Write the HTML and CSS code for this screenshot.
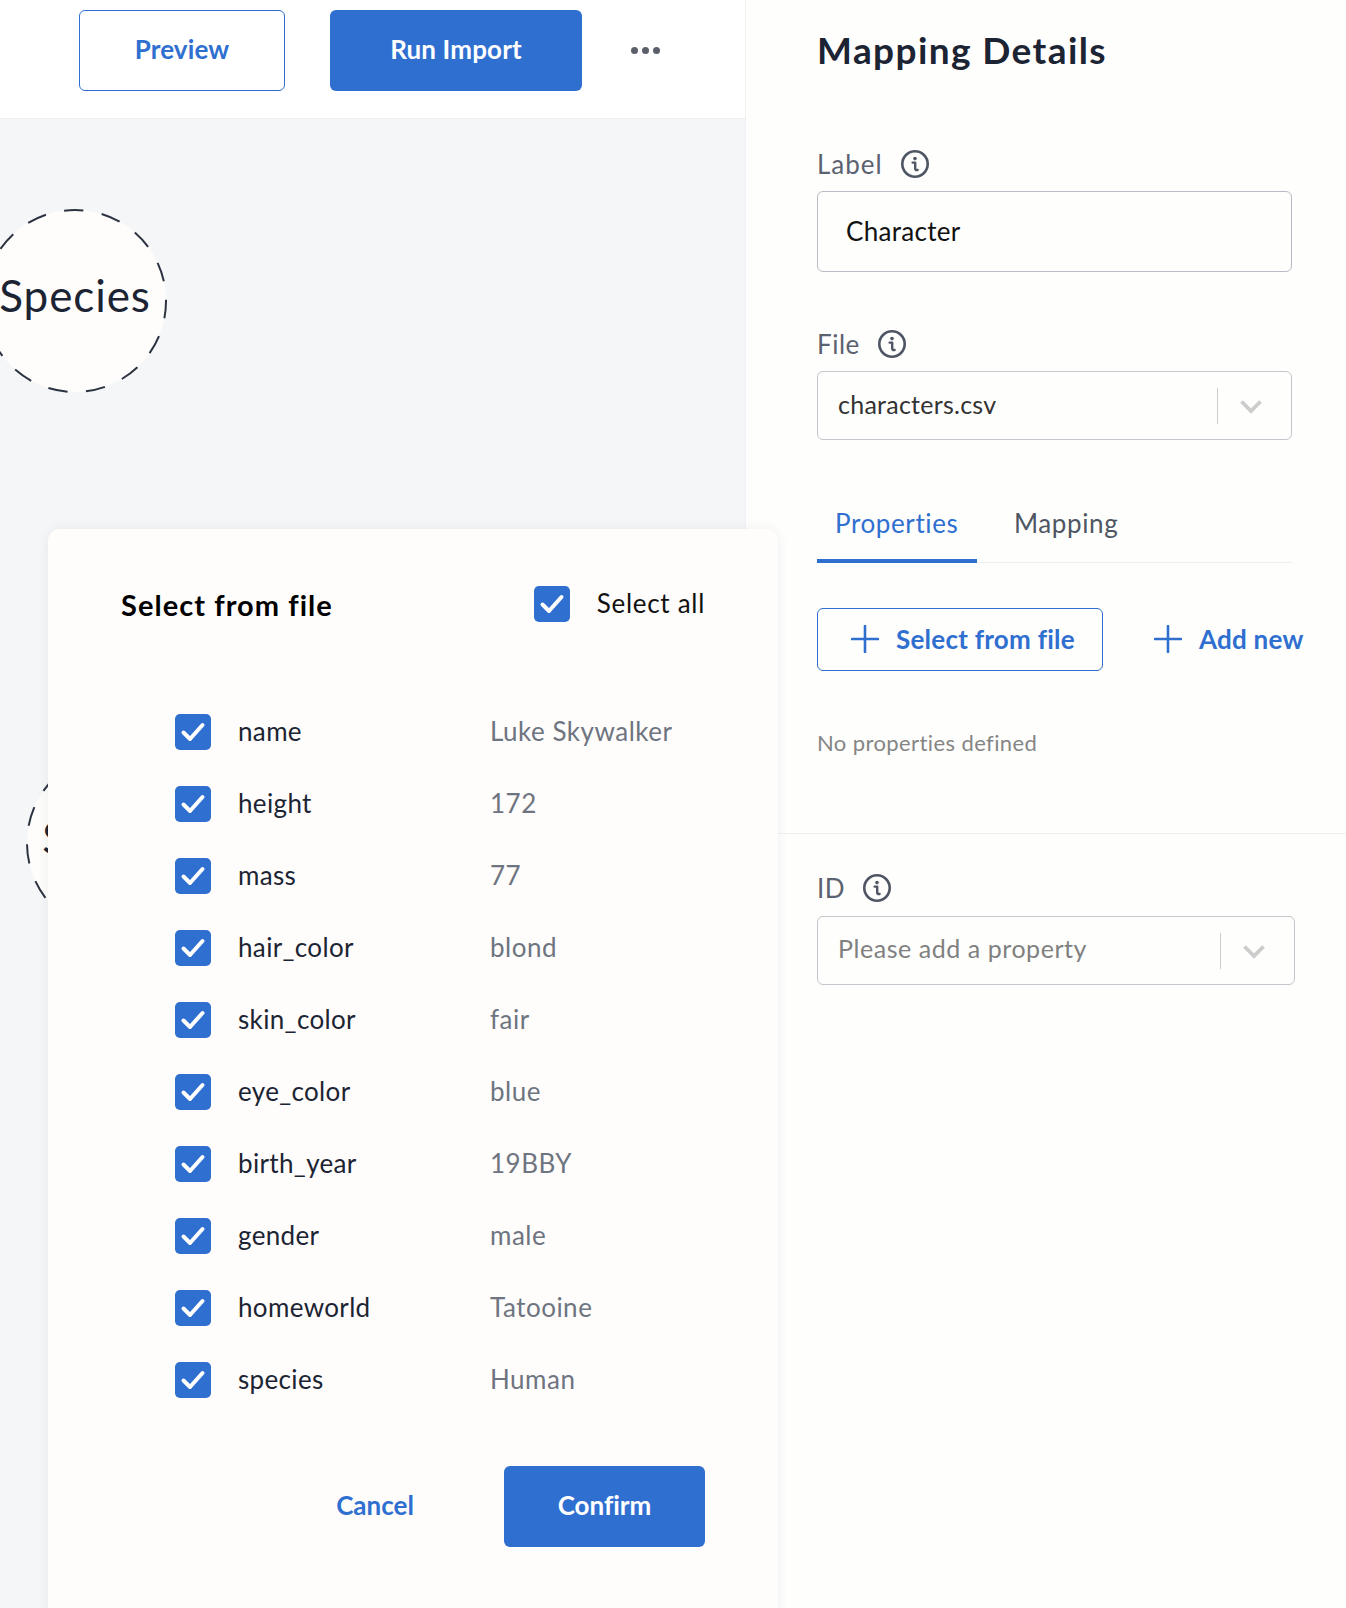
FILE: index.html
```html
<!DOCTYPE html>
<html>
<head>
<meta charset="utf-8">
<title>Mapping Details</title>
<link rel="stylesheet" href="styles.css">
</head>
<body>
<svg class="sprite" width="0" height="0">
    <symbol id="check" viewBox="0 0 36 36">
        <path d="M8.5 18.5l6.5 6.5L27.5 11" fill="none" stroke="#fff" stroke-width="4" stroke-linecap="round" stroke-linejoin="round"/>
    </symbol>
    <symbol id="info" viewBox="0 0 30 30">
        <circle cx="15" cy="15" r="12.7" fill="none" stroke="currentColor" stroke-width="2.6"/>
        <circle cx="15" cy="9.6" r="1.8" fill="currentColor"/>
        <path d="M12.6 13.6h2.6v6.2q0 1.5 2.4 1.2" fill="none" stroke="currentColor" stroke-width="2.4" stroke-linecap="round" stroke-linejoin="round"/>
    </symbol>
    <symbol id="plus" viewBox="0 0 28 28">
        <path d="M14 1v26M1 14h26" fill="none" stroke="currentColor" stroke-width="2.6" stroke-linecap="round"/>
    </symbol>
    <symbol id="chevron" viewBox="0 0 22 14">
        <path d="M1.5 1.5L11 11l9.5-9.5" fill="none" stroke="#ccc" stroke-width="3.8"/>
    </symbol>
    <symbol id="ring" viewBox="0 0 186 186">
        <circle cx="93" cy="93" r="91" fill="#fefdfc" stroke="#2c3340" stroke-width="2" stroke-dasharray="19.5 18.62" stroke-dashoffset="2.2"/>
    </symbol>
</svg>
<div class="app">
    <div class="main">
        <div class="toolbar">
            <button class="btn btn-outline btn-preview">Preview</button>
            <button class="btn btn-solid btn-run">Run Import</button>
            <div class="more"><i></i><i></i><i></i></div>
        </div>
        <div class="canvas">
            <div class="node node-species">
                <svg class="node-ring"><use href="#ring"/></svg>
                <span>Species</span>
            </div>
            <div class="node node-hidden">
                <svg class="node-ring"><use href="#ring"/></svg>
                <span>Species</span>
            </div>
        </div>
    </div>

    <div class="details">
        <div class="details-top">
            <h1>Mapping Details</h1>
            <div class="field-label field-label-first">Label <svg class="info"><use href="#info"/></svg></div>
            <div class="text-input">Character</div>
            <div class="field-label field-label-file">File <svg class="info"><use href="#info"/></svg></div>
            <div class="select select-file">
                <span class="select-value">characters.csv</span>
                <span class="select-sep"></span>
                <svg class="chevron"><use href="#chevron"/></svg>
            </div>
            <div class="tabs">
                <div class="tab tab-active">Properties</div>
                <div class="tab">Mapping</div>
            </div>
            <div class="actions">
                <button class="add-btn add-btn-boxed"><svg class="plus"><use href="#plus"/></svg>Select from file</button>
                <button class="add-btn add-btn-new"><svg class="plus"><use href="#plus"/></svg>Add new</button>
            </div>
            <p class="empty">No properties defined</p>
        </div>
        <div class="details-id">
            <div class="field-label">ID <svg class="info"><use href="#info"/></svg></div>
            <div class="select select-id">
                <span class="select-value select-placeholder">Please add a property</span>
                <span class="select-sep"></span>
                <svg class="chevron"><use href="#chevron"/></svg>
            </div>
        </div>
    </div>

    <div class="modal">
        <div class="modal-head">
            <h2>Select from file</h2>
            <label class="select-all"><svg class="box"><use href="#check"/></svg><span>Select all</span></label>
        </div>
        <ul class="props">
            <li><svg class="box"><use href="#check"/></svg><span class="prop-name">name</span><span class="prop-value">Luke Skywalker</span></li>
            <li><svg class="box"><use href="#check"/></svg><span class="prop-name">height</span><span class="prop-value">172</span></li>
            <li><svg class="box"><use href="#check"/></svg><span class="prop-name">mass</span><span class="prop-value">77</span></li>
            <li><svg class="box"><use href="#check"/></svg><span class="prop-name">hair_color</span><span class="prop-value">blond</span></li>
            <li><svg class="box"><use href="#check"/></svg><span class="prop-name">skin_color</span><span class="prop-value">fair</span></li>
            <li><svg class="box"><use href="#check"/></svg><span class="prop-name">eye_color</span><span class="prop-value">blue</span></li>
            <li><svg class="box"><use href="#check"/></svg><span class="prop-name">birth_year</span><span class="prop-value">19BBY</span></li>
            <li><svg class="box"><use href="#check"/></svg><span class="prop-name">gender</span><span class="prop-value">male</span></li>
            <li><svg class="box"><use href="#check"/></svg><span class="prop-name">homeworld</span><span class="prop-value">Tatooine</span></li>
            <li><svg class="box"><use href="#check"/></svg><span class="prop-name">species</span><span class="prop-value">Human</span></li>
        </ul>
        <div class="modal-foot">
            <button class="btn btn-link">Cancel</button>
            <button class="btn btn-solid btn-confirm">Confirm</button>
        </div>
    </div>
</div>
</body>
</html>
```

FILE: styles.css
```css
*{
    margin: 0;
    padding: 0;
    box-sizing: border-box;
}
body{
    font-family: "Lato", "Noto Sans", sans-serif;
    font-variant-ligatures: none;
    background-color: #fefefd;
    color: #1c2433;
}
button{
    font-family: inherit;
    font-variant-ligatures: none;
    background: none;
    border: 0;
}
.sprite{
    position: absolute;
}
.app{
    position: relative;
    display: flex;
    height: 1608px;
    overflow: hidden;
}

/* left side */
.main{
    width: 746px;
    border-right: 1px solid #f0f1f3;
    display: flex;
    flex-direction: column;
}
.toolbar{
    height: 119px;
    flex: none;
    background-color: #fff;
    border-bottom: 1px solid #eff0f2;
    padding: 10px 0 0 79px;
    display: flex;
    align-items: flex-start;
}
.btn{
    height: 81px;
    padding-bottom: 3px;
    border-radius: 6px;
    font-size: 26px;
    font-weight: 700;
}
.btn-outline{
    border: 1px solid #2f6fd0;
    color: #2f6fd0;
    background-color: #fff;
    letter-spacing: .1px;
}
.btn-solid{
    background-color: #2f6fd0;
    color: #fff;
}
.btn-link{
    color: #2f6fd0;
    width: 78px;
}
.btn-preview{
    width: 206px;
}
.btn-run{
    width: 252px;
    margin-left: 45px;
    letter-spacing: .15px;
}
.btn-confirm{
    width: 201px;
}
.more{
    display: flex;
    gap: 4px;
    margin: 37px 0 0 49px;
}
.more i{
    width: 7px;
    height: 7px;
    border-radius: 50%;
    background-color: #5a5f69;
}
.canvas{
    position: relative;
    flex: 1;
    background-color: #f5f6f8;
}
.node{
    position: absolute;
    width: 186px;
    height: 186px;
    display: flex;
    align-items: center;
    justify-content: center;
    font-size: 44px;
    letter-spacing: .9px;
    color: #1c2433;
}
.node span{
    position: relative;
    margin-top: -12px;
}
.node-ring{
    position: absolute;
    left: 0;
    top: 0;
    width: 186px;
    height: 186px;
}
.node-species{
    left: -18px;
    top: 89px;
}
.node-hidden{
    left: 25px;
    top: 631px;
}

/* right side */
.details{
    flex: 1;
    min-width: 0;
}
.details-top{
    padding: 0 0 75px 71px;
    border-bottom: 1px solid #eff0f2;
}
.details-top h1{
    font-size: 37px;
    font-weight: 700;
    line-height: 100px;
    letter-spacing: 1.4px;
    color: #1c2433;
}
.field-label{
    display: flex;
    align-items: center;
    height: 28px;
    font-size: 26px;
    letter-spacing: .5px;
    color: #5b6270;
}
.field-label-first{
    margin-top: 50px;
    letter-spacing: 1px;
}
.field-label-file{
    margin-top: 58px;
}
.info{
    width: 30px;
    height: 30px;
    margin-left: 17px;
    color: #4f5663;
}
.text-input{
    width: 475px;
    height: 81px;
    margin-top: 13px;
    padding-left: 28px;
    border: 1px solid #b8bbc1;
    border-radius: 6px;
    font-size: 26px;
    letter-spacing: .3px;
    line-height: 79px;
    color: #111;
}
.select{
    display: flex;
    align-items: center;
    height: 69px;
    margin-top: 13px;
    padding-left: 20px;
    border: 1px solid #c4c6cb;
    border-radius: 6px;
    font-size: 25px;
    letter-spacing: .25px;
    color: #333;
}
.select-file{
    width: 475px;
}
.select-value{
    flex: 1;
    margin-top: -4px;
}
.select-placeholder{
    color: #808080;
    letter-spacing: .55px;
    margin-top: -6px;
}
.select-sep{
    width: 1px;
    height: 36px;
    background-color: #ccc;
}
.chevron{
    width: 22px;
    height: 14px;
    margin: 2px 29px 0 22px;
}
.tabs{
    display: flex;
    width: 476px;
    height: 80px;
    margin-top: 43px;
    border-bottom: 1px solid #eff0f2;
}
.tab{
    height: 80px;
    line-height: 80px;
    padding: 0 18px;
    font-size: 26px;
    letter-spacing: .6px;
    color: #4f5663;
}
.tab-active{
    width: 160px;
    color: #2f6fd0;
    border-bottom: 4px solid #2f6fd0;
    line-height: 80px;
}
.tab + .tab{
    margin-left: 19px;
}
.actions{
    display: flex;
    align-items: center;
    margin-top: 45px;
}
.add-btn{
    display: flex;
    align-items: center;
    height: 63px;
    font-size: 26px;
    font-weight: 700;
    letter-spacing: .25px;
    line-height: 30px;
    color: #2f6fd0;
    white-space: nowrap;
    padding-bottom: 1px;
}
.add-btn-boxed{
    width: 286px;
    padding-left: 33px;
    border: 1px solid #2f6fd0;
    border-radius: 6px;
}
.add-btn-new{
    margin-left: 51px;
}
.plus{
    width: 28px;
    height: 28px;
    margin-right: 17px;
}
.empty{
    margin-top: 57px;
    font-size: 22px;
    letter-spacing: .4px;
    line-height: 30px;
    color: #858585;
}
.details-id{
    padding: 40px 0 0 71px;
}
.select-id{
    width: 478px;
    margin-top: 14px;
}

/* modal */
.modal{
    position: absolute;
    left: 48px;
    top: 529px;
    width: 730px;
    height: 1200px;
    padding: 57px 73px 0;
    background-color: #fefdfc;
    border-radius: 12px;
    box-shadow: 0 0 12px rgba(30,40,60,.07);
}
.modal-head{
    display: flex;
    align-items: center;
    justify-content: space-between;
    height: 36px;
}
.modal-head h2{
    font-size: 29px;
    font-weight: 700;
    letter-spacing: 1.05px;
    color: #000;
    padding-top: 1px;
}
.select-all{
    display: flex;
    align-items: center;
    font-size: 26px;
    letter-spacing: .7px;
    color: #111;
}
.select-all span{
    margin-top: -2px;
}
.box{
    flex: none;
    width: 36px;
    height: 36px;
    background-color: #2f6fd0;
    border-radius: 5px;
}
.select-all .box{
    margin-right: 27px;
}
.props{
    list-style: none;
    padding: 74px 0 0 54px;
}
.props li{
    display: flex;
    align-items: center;
    height: 72px;
    font-size: 26px;
    letter-spacing: .5px;
}
.prop-name{
    width: 252px;
    margin: -2px 0 0 27px;
    letter-spacing: .35px;
    color: #1c2433;
}
.prop-value{
    margin-top: -2px;
    color: #6e7480;
}
.modal-foot{
    display: flex;
    justify-content: flex-end;
    align-items: center;
    gap: 90px;
    margin-top: 50px;
}
```
